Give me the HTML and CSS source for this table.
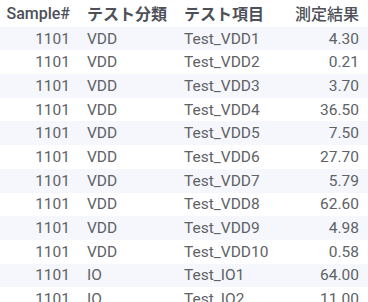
FILE: index.html
```html
<!DOCTYPE html>
<html>
<head>
<meta charset="utf-8">
<link rel="stylesheet" href="styles.css">
</head>
<body>
<table class="grid">
  <colgroup>
    <col class="c1"><col class="c2"><col class="c3"><col class="c4">
  </colgroup>
  <thead>
    <tr><th class="num">Sample#</th><th class="txt">テスト分類</th><th class="txt">テスト項目</th><th class="num">測定結果</th></tr>
  </thead>
  <tbody>
    <tr><td class="num">1101</td><td class="txt">VDD</td><td class="txt">Test_VDD1</td><td class="num">4.30</td></tr>
    <tr><td class="num">1101</td><td class="txt">VDD</td><td class="txt">Test_VDD2</td><td class="num">0.21</td></tr>
    <tr><td class="num">1101</td><td class="txt">VDD</td><td class="txt">Test_VDD3</td><td class="num">3.70</td></tr>
    <tr><td class="num">1101</td><td class="txt">VDD</td><td class="txt">Test_VDD4</td><td class="num">36.50</td></tr>
    <tr><td class="num">1101</td><td class="txt">VDD</td><td class="txt">Test_VDD5</td><td class="num">7.50</td></tr>
    <tr><td class="num">1101</td><td class="txt">VDD</td><td class="txt">Test_VDD6</td><td class="num">27.70</td></tr>
    <tr><td class="num">1101</td><td class="txt">VDD</td><td class="txt">Test_VDD7</td><td class="num">5.79</td></tr>
    <tr><td class="num">1101</td><td class="txt">VDD</td><td class="txt">Test_VDD8</td><td class="num">62.60</td></tr>
    <tr><td class="num">1101</td><td class="txt">VDD</td><td class="txt">Test_VDD9</td><td class="num">4.98</td></tr>
    <tr><td class="num">1101</td><td class="txt">VDD</td><td class="txt">Test_VDD10</td><td class="num">0.58</td></tr>
    <tr><td class="num">1101</td><td class="txt">IO</td><td class="txt">Test_IO1</td><td class="num">64.00</td></tr>
    <tr><td class="num">1101</td><td class="txt">IO</td><td class="txt">Test_IO2</td><td class="num">11.00</td></tr>
  </tbody>
</table>
</body>
</html>
```
FILE: styles.css
```css
html, body {
  margin: 0;
  padding: 0;
  background: #ffffff;
  overflow: hidden;
}
.grid {
  width: 368px;
  border-collapse: collapse;
  table-layout: fixed;
  font-family: Roboto, "Noto Sans CJK JP", sans-serif;
  font-size: 15.5px;
  color: #606266;
}
.c1 { width: 78px; }
.c2 { width: 98px; }
.c3 { width: 110px; }
.c4 { width: 82px; }
th, td {
  padding: 0;
  white-space: nowrap;
  overflow: hidden;
}
th {
  height: 26.7px;
  font-size: 16px;
  font-weight: 500;
  color: #4d5058;
  vertical-align: middle;
}
td {
  height: 23.7px;
  vertical-align: middle;
}
.num { text-align: right; padding-right: 8px; }
.txt { text-align: left; padding-left: 9px; }
th.txt { font-weight: 700; }
.grid tr > :first-child { padding-right: 8px; }
.grid tr > :last-child { padding-right: 9px; }
.grid td.txt:nth-child(3), .grid th.txt:nth-child(3) { padding-left: 8px; }
tbody tr:nth-child(odd) { background: #f5f7fc; }
```
